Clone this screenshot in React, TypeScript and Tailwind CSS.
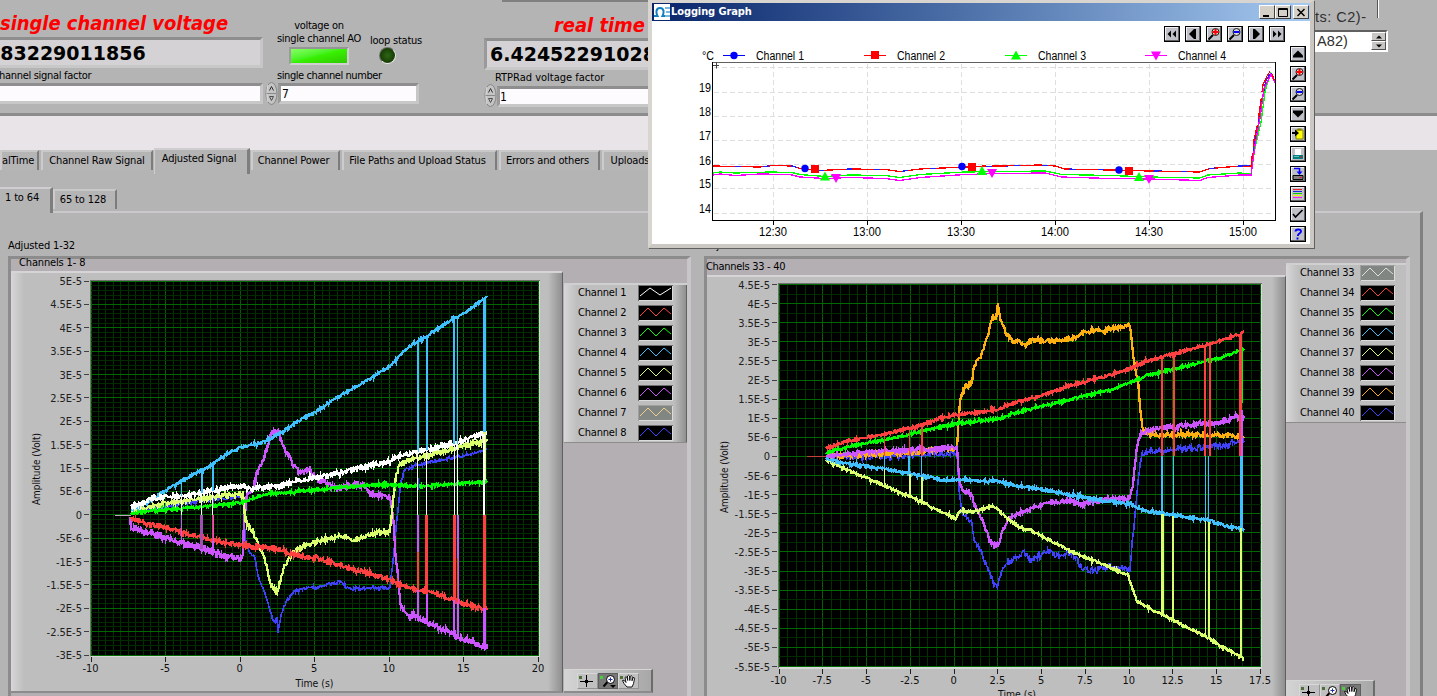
import React from "react";

type Pt = [number, number];

interface Trace {
  color: string;
  points: Pt[];
  noise: number;
  width?: number;
}

interface Drop {
  x: number;
  y1: number;
  y2: number;
  color: string;
  width: number;
}

function noisyPath(points: Pt[], noise: number, seed: number): string {
  let s = seed;
  const rand = () => {
    s = (s * 1103515245 + 12345) % 2147483648;
    return s / 2147483648;
  };
  const out: string[] = [];
  for (let i = 0; i < points.length - 1; i++) {
    const [x0, y0] = points[i];
    const [x1, y1] = points[i + 1];
    const n = Math.max(1, Math.round((x1 - x0) / 0.75));
    for (let k = 0; k < n; k++) {
      const t = k / n;
      const spike = rand() > 0.9 ? 1.9 : 1;
      const y = y0 + (y1 - y0) * t + (rand() - 0.5) * 2.3 * noise * spike;
      out.push(`${(x0 + (x1 - x0) * t).toFixed(1)},${y.toFixed(1)}`);
    }
  }
  const last = points[points.length - 1];
  out.push(`${last[0]},${last[1]}`);
  return out.join(" ");
}

const SKY = "#40c0ff";
const RED = "#ff4040";
const GREEN = "#00ff00";
const LIME = "#dcff70";
const PURPLE = "#cc55ff";
const BLUE = "#4040ff";
const ORANGE = "#ffb010";
const WHITE = "#ffffff";

const leftTraces: Trace[] = [
  { color: BLUE, noise: 1.3, width: 1.6, points: [[131, 511], [165, 507], [200, 501], [240, 497], [244, 497], [245, 540], [249, 551], [255, 557], [258, 577], [263, 588], [268, 603], [273, 620], [275, 622], [277, 618], [278, 632], [281, 615], [286, 602], [294, 592], [300, 589], [315, 588], [330, 584], [340, 582], [350, 589], [370, 588], [390, 588], [393, 560], [397, 520], [401, 480], [405, 470], [415, 466], [440, 460], [465, 455], [487, 449]] },
  { color: PURPLE, noise: 2.3, points: [[130, 516], [131, 529], [150, 532], [165, 538], [182, 543], [200, 548], [220, 554], [240, 559], [243, 556], [244, 520], [247, 495], [253, 490], [257, 472], [262, 462], [268, 445], [272, 432], [279, 431], [282, 445], [288, 455], [294, 467], [300, 473], [307, 470], [316, 478], [327, 484], [340, 488], [352, 484], [365, 486], [370, 494], [385, 496], [390, 498], [393, 515], [396, 560], [399, 590], [401, 608], [406, 613], [420, 620], [440, 628], [455, 635], [470, 641], [487, 649]] },
  { color: LIME, noise: 1.9, points: [[131, 511], [165, 504], [200, 499], [240, 493], [243, 493], [245, 515], [247, 524], [253, 532], [257, 541], [262, 551], [266, 563], [269, 578], [273, 589], [278, 590], [281, 578], [285, 564], [293, 553], [302, 547], [316, 542], [330, 538], [345, 536], [352, 541], [365, 536], [380, 532], [389, 531], [391, 525], [393, 500], [396, 477], [399, 466], [405, 461], [430, 455], [456, 448], [470, 445], [487, 439]] },
  { color: SKY, noise: 1.1, points: [[131, 510], [148, 502], [165, 491], [182, 481], [200, 471], [213, 464], [225, 455], [240, 447], [262, 443], [270, 439], [277, 435], [290, 427], [300, 420], [316, 412], [330, 402], [350, 390], [370, 379], [390, 366], [397, 359], [405, 350], [418, 341], [427, 336], [440, 327], [455, 318], [465, 313], [478, 303], [485, 299], [487, 296]] },
  { color: GREEN, noise: 1.1, points: [[131, 513], [165, 510], [200, 507], [240, 503], [253, 498], [265, 495], [280, 493], [310, 490], [345, 487], [375, 485], [395, 485], [425, 486], [455, 484], [487, 482]] },
  { color: RED, noise: 1.7, points: [[131, 518], [140, 522], [165, 527], [182, 533], [200, 537], [220, 542], [240, 545], [270, 548], [280, 550], [290, 554], [300, 556], [320, 559], [345, 567], [370, 573], [390, 580], [405, 587], [420, 590], [440, 595], [456, 601], [470, 605], [487, 610]] },
  { color: WHITE, noise: 1.8, points: [[131, 508], [148, 500], [165, 497], [182, 496], [200, 493], [220, 489], [240, 486], [250, 488], [275, 487], [300, 480], [316, 478], [345, 471], [370, 466], [389, 461], [405, 455], [420, 451], [440, 447], [456, 443], [470, 438], [487, 432]] },
];

const leftDrops: Drop[] = [
  { x: 181.5, y1: 481, y2: 496, color: SKY, width: 1 },
  { x: 181.5, y1: 496, y2: 515, color: WHITE, width: 1 },
  { x: 181.5, y1: 515, y2: 545, color: PURPLE, width: 1 },
  { x: 202, y1: 470, y2: 493, color: SKY, width: 2 },
  { x: 201.5, y1: 493, y2: 515, color: WHITE, width: 1 },
  { x: 201.5, y1: 515, y2: 549, color: "#a050b0", width: 3 },
  { x: 213, y1: 465, y2: 491, color: SKY, width: 2 },
  { x: 212.5, y1: 491, y2: 515, color: WHITE, width: 1 },
  { x: 213, y1: 515, y2: 553, color: PURPLE, width: 2 },
  { x: 212.5, y1: 515, y2: 541, color: RED, width: 1 },
  { x: 418, y1: 341, y2: 452, color: SKY, width: 2 },
  { x: 418, y1: 478, y2: 490, color: BLUE, width: 2 },
  { x: 417.5, y1: 450, y2: 515, color: WHITE, width: 1 },
  { x: 418, y1: 515, y2: 620, color: PURPLE, width: 2 },
  { x: 418, y1: 552, y2: 590, color: RED, width: 2 },
  { x: 427, y1: 336, y2: 450, color: SKY, width: 2 },
  { x: 426.5, y1: 450, y2: 515, color: WHITE, width: 1 },
  { x: 426.5, y1: 515, y2: 594, color: RED, width: 3 },
  { x: 427, y1: 594, y2: 624, color: PURPLE, width: 2 },
  { x: 454, y1: 318, y2: 444, color: SKY, width: 2 },
  { x: 454.5, y1: 444, y2: 515, color: WHITE, width: 1 },
  { x: 454.5, y1: 515, y2: 600, color: RED, width: 3 },
  { x: 454, y1: 600, y2: 635, color: PURPLE, width: 2 },
  { x: 457.5, y1: 317, y2: 444, color: SKY, width: 1 },
  { x: 457.5, y1: 444, y2: 515, color: WHITE, width: 1 },
  { x: 458, y1: 515, y2: 637, color: PURPLE, width: 2 },
  { x: 457.5, y1: 558, y2: 602, color: RED, width: 1 },
  { x: 484.5, y1: 300, y2: 432, color: SKY, width: 3 },
  { x: 484.5, y1: 432, y2: 480, color: LIME, width: 3 },
  { x: 484, y1: 434, y2: 515, color: WHITE, width: 2 },
  { x: 484.5, y1: 515, y2: 608, color: RED, width: 3 },
  { x: 484.5, y1: 608, y2: 647, color: PURPLE, width: 3 },
];

const rightTraces: Trace[] = [
  { color: BLUE, noise: 2.4, width: 1.6, points: [[826, 457], [900, 456], [957, 453], [959, 490], [962, 512], [972, 523], [974, 540], [980, 549], [987, 567], [993, 582], [998, 586], [1000, 575], [1008, 563], [1024, 553], [1032, 561], [1047, 551], [1060, 556], [1073, 553], [1080, 566], [1090, 571], [1110, 567], [1130, 570], [1132, 545], [1135, 515], [1138, 480], [1141, 458], [1146, 451], [1175, 449], [1210, 447], [1244, 442]] },
  { color: ORANGE, noise: 1.7, points: [[826, 456], [885, 454], [925, 451], [957, 448], [958, 430], [960, 400], [965, 387], [972, 383], [974, 365], [980, 358], [984, 348], [988, 335], [993, 316], [996, 320], [998, 303], [1000, 318], [1005, 332], [1012, 341], [1020, 342], [1025, 346], [1030, 340], [1060, 341], [1078, 337], [1082, 332], [1110, 330], [1130, 325], [1132, 345], [1135, 368], [1138, 380], [1141, 418], [1143, 431], [1160, 435], [1220, 435], [1244, 438]] },
  { color: PURPLE, noise: 1.8, points: [[826, 456], [885, 451], [925, 449], [957, 447], [959, 478], [962, 490], [972, 494], [974, 505], [980, 514], [985, 528], [990, 541], [994, 545], [999, 544], [1003, 529], [1010, 518], [1020, 513], [1035, 507], [1050, 502], [1070, 501], [1083, 504], [1105, 499], [1130, 498], [1133, 485], [1137, 445], [1141, 433], [1150, 430], [1180, 426], [1215, 423], [1244, 416]] },
  { color: LIME, noise: 1.0, points: [[826, 460], [840, 467], [885, 486], [920, 501], [956, 519], [960, 511], [972, 512], [994, 506], [1000, 512], [1010, 521], [1025, 530], [1030, 530], [1055, 543], [1074, 553], [1100, 563], [1128, 575], [1132, 587], [1137, 601], [1150, 609], [1165, 616], [1190, 629], [1205, 636], [1225, 648], [1244, 659]] },
  { color: SKY, noise: 1.2, points: [[826, 458], [840, 463], [885, 469], [915, 475], [945, 480], [998, 481], [1020, 486], [1050, 491], [1080, 497], [1130, 504], [1145, 511], [1180, 516], [1210, 521], [1230, 527], [1244, 529]] },
  { color: GREEN, noise: 1.1, points: [[826, 453], [850, 446], [885, 440], [915, 433], [940, 427], [955, 424], [998, 419], [1015, 413], [1050, 404], [1080, 397], [1110, 390], [1130, 383], [1145, 376], [1165, 371], [1190, 365], [1220, 358], [1244, 349]] },
  { color: RED, noise: 1.1, points: [[826, 449], [840, 443], [855, 440], [885, 434], [910, 428], [925, 424], [940, 418], [955, 415], [975, 413], [998, 409], [1020, 401], [1050, 393], [1075, 384], [1100, 378], [1130, 369], [1145, 362], [1162, 357], [1180, 352], [1210, 344], [1240, 334], [1244, 332]] },
];

const rightDrops: Drop[] = [
  { x: 884.5, y1: 434, y2: 456, color: RED, width: 1 },
  { x: 884.5, y1: 456, y2: 469, color: SKY, width: 1 },
  { x: 884.5, y1: 469, y2: 486, color: LIME, width: 1 },
  { x: 909.5, y1: 428, y2: 456, color: RED, width: 1 },
  { x: 909, y1: 456, y2: 474, color: SKY, width: 2 },
  { x: 910, y1: 474, y2: 498, color: LIME, width: 2 },
  { x: 922, y1: 425, y2: 456, color: RED, width: 2 },
  { x: 921.5, y1: 456, y2: 477, color: SKY, width: 1 },
  { x: 922, y1: 477, y2: 503, color: LIME, width: 2 },
  { x: 1162, y1: 357, y2: 456, color: RED, width: 2 },
  { x: 1162, y1: 456, y2: 514, color: SKY, width: 1.6 },
  { x: 1162.5, y1: 514, y2: 615, color: LIME, width: 3 },
  { x: 1174, y1: 354, y2: 456, color: RED, width: 2 },
  { x: 1173.5, y1: 456, y2: 516, color: SKY, width: 1 },
  { x: 1173, y1: 516, y2: 620, color: LIME, width: 2 },
  { x: 1205, y1: 345, y2: 456, color: RED, width: 2 },
  { x: 1205.5, y1: 456, y2: 521, color: SKY, width: 1 },
  { x: 1205.5, y1: 521, y2: 637, color: LIME, width: 1 },
  { x: 1210, y1: 344, y2: 456, color: RED, width: 2 },
  { x: 1208.5, y1: 456, y2: 522, color: SKY, width: 1 },
  { x: 1209, y1: 522, y2: 639, color: LIME, width: 2 },
  { x: 1242, y1: 350, y2: 403, color: GREEN, width: 2 },
  { x: 1240.5, y1: 334, y2: 410, color: RED, width: 3 },
  { x: 1241, y1: 410, y2: 456, color: PURPLE, width: 4 },
  { x: 1240, y1: 410, y2: 456, color: RED, width: 2 },
  { x: 1241.5, y1: 456, y2: 528, color: SKY, width: 3 },
  { x: 1241, y1: 528, y2: 655, color: LIME, width: 2 },
];

interface AxisTick {
  at: number;
  label: string;
}

interface PlotProps {
  ox: number;
  oy: number;
  w: number;
  h: number;
  plot: { x1: number; y1: number; x2: number; y2: number };
  xTicks: AxisTick[];
  yTicks: AxisTick[];
  xMinor: number;
  yMinor: number;
  traces: Trace[];
  drops: Drop[];
  lead: { x1: number; x2: number; y: number; color: string };
  yTitle: { x: number; y: number };
  xTitle: { x: number; y: number };
}

function lines(ticks: AxisTick[], minor: number): number[] {
  const a = ticks[0].at;
  const b = ticks[ticks.length - 1].at;
  const n = (ticks.length - 1) * minor;
  return Array.from({ length: n + 1 }, (_, i) => a + ((b - a) * i) / n);
}

function Plot(p: PlotProps) {
  const { plot } = p;
  return (
    <svg
      className="block shrink-0 font-['DejaVu_Sans_Condensed','DejaVu_Sans',sans-serif] text-[11px] tracking-normal"
      width={p.w}
      height={p.h}
      viewBox={`${p.ox} ${p.oy} ${p.w} ${p.h}`}
    >
      <rect x={plot.x1 - 1} y={plot.y1 - 1} width={plot.x2 - plot.x1 + 2} height={plot.y2 - plot.y1 + 2} fill="#707070" />
      <rect x={plot.x1} y={plot.y1} width={plot.x2 - plot.x1 + 1} height={plot.y2 - plot.y1 + 2} fill="#d8d8d8" />
      <rect x={plot.x1} y={plot.y1} width={plot.x2 - plot.x1} height={plot.y2 - plot.y1} fill="#000" />
      <g shapeRendering="crispEdges">
        {lines(p.xTicks, p.xMinor).map((x, i) => (
          <line key={"x" + i} x1={x} x2={x} y1={plot.y1} y2={plot.y2} stroke={i % p.xMinor === 0 ? "#006000" : "#003200"} />
        ))}
        {lines(p.yTicks, p.yMinor).map((y, i) => (
          <line key={"y" + i} x1={plot.x1} x2={plot.x2} y1={y} y2={y} stroke={i % p.yMinor === 0 ? "#006800" : "#002c00"} />
        ))}
        {p.xTicks.map((t) => (
          <line key={t.label} x1={t.at} x2={t.at} y1={plot.y2 + 2} y2={plot.y2 + 7} stroke="#202020" />
        ))}
        {p.yTicks.map((t) => (
          <line key={t.label} x1={plot.x1 - 7} x2={plot.x1 - 2} y1={t.at} y2={t.at} stroke="#404040" />
        ))}
        <line x1={p.lead.x1} x2={p.lead.x2} y1={p.lead.y} y2={p.lead.y} stroke={p.lead.color} />
        {p.traces.map((t, i) => (
          <polyline key={i} points={noisyPath(t.points, t.noise, 77 + i * 991)} fill="none" stroke={t.color} strokeWidth={t.width ?? 2.3} />
        ))}
        {p.drops.map((d, i) => (
          <line key={i} x1={d.x} x2={d.x} y1={d.y1} y2={d.y2} stroke={d.color} strokeWidth={d.width} />
        ))}
      </g>
      {p.yTicks.map((t) => (
        <text key={t.label} x={plot.x1 - 9} y={t.at + 4} textAnchor="end" fill="#202020">
          {t.label}
        </text>
      ))}
      {p.xTicks.map((t) => (
        <text key={t.label} x={t.at - 0.5} y={plot.y2 + 17} textAnchor="middle" fill="#101010">
          {t.label}
        </text>
      ))}
      <text transform={`translate(${p.yTitle.x} ${p.yTitle.y}) rotate(-90)`} textAnchor="middle" textLength="72" lengthAdjust="spacingAndGlyphs" fill="#101010">
        Amplitude (Volt)
      </text>
      <text x={p.xTitle.x} y={p.xTitle.y} textAnchor="middle" textLength="38" lengthAdjust="spacingAndGlyphs" fill="#101010">
        Time (s)
      </text>
    </svg>
  );
}

function spread(labels: string[], first: number, last: number): AxisTick[] {
  return labels.map((label, i) => ({ label, at: first + ((last - first) * i) / (labels.length - 1) }));
}

const leftY = spread(
  ["5E-5", "4.5E-5", "4E-5", "3.5E-5", "3E-5", "2.5E-5", "2E-5", "1.5E-5", "1E-5", "5E-6", "0", "-5E-6", "-1E-5", "-1.5E-5", "-2E-5", "-2.5E-5", "-3E-5"],
  281,
  655,
);
const leftX = spread(["-10", "-5", "0", "5", "10", "15", "20"], 91, 538.5);
const rightY = spread(
  ["4.5E-5", "4E-5", "3.5E-5", "3E-5", "2.5E-5", "2E-5", "1.5E-5", "1E-5", "5E-6", "0", "-5E-6", "-1E-5", "-1.5E-5", "-2E-5", "-2.5E-5", "-3E-5", "-3.5E-5", "-4E-5", "-4.5E-5", "-5E-5", "-5.5E-5"],
  284.500,
  666.500,
);
const rightX = spread(["-10", "-7.5", "-5", "-2.5", "0", "2.5", "5", "7.5", "10", "12.5", "15", "17.5"], 779, 1260.5);

function LegendRow({ name, color, muted, first }: { name: string; color: string; muted?: boolean; first?: boolean }) {
  return (
    <div className="flex h-5 items-center">
      <span className="w-[60px] tracking-[-0.2px] whitespace-nowrap">{name}</span>
      <svg className="block" width="35" height="16">
        <rect width="35" height="16" fill={muted ? "#a0a0a0" : "#707070"} />
        <rect x="1" y="1" width="34" height="15" fill="#dcdcdc" />
        <rect x="1" y="1" width="33" height="14" fill={muted ? "#828682" : "#000"} />
        <polyline points={first ? "2,11 12,3 22,10 33,3" : "2,11 10,3 18,11 26,3 33,9"} fill="none" stroke={color} strokeWidth="1" />
      </svg>
    </div>
  );
}

function Legend({ items, tail }: { items: { name: string; color: string; muted?: boolean; first?: boolean }[]; tail: string }) {
  return (
    <div className="flex h-[160px] shrink-0 border-t-2 border-b border-t-[#d0d0d0] border-b-[#8c8c8c] bg-[#bebebe]">
      <div className="w-[13px] bg-linear-to-r from-[#d8d6d8] to-[#bebebe]" />
      <div className="-mt-[2px] w-[97px] pl-px">
        {items.map((i) => (
          <LegendRow key={i.name} {...i} />
        ))}
      </div>
      <div className={tail} />
    </div>
  );
}

function Hand({ lit }: { lit: boolean }) {
  return (
    <svg width="18" height="14" viewBox="0 0 18 14" className="block">
      <path d="M8 13 5 9.500 3.500 6.500l1.500-.3L7 8.500 6 3.500l1-.8 1 .8.7 3L8.500 2l1-.8 1 .8.3 4.500.5-4.200 1-.6.9.8-.2 4.300 1-3 1-.4.6.8-1.100 5.500-1.500 3.300z" fill="#fff" stroke="#000" strokeWidth="0.9" />
      <rect x="1" y="2" width="3" height="3" fill={lit ? "#48d038" : "#4c7038"} />
    </svg>
  );
}

function Cross() {
  return (
    <svg width="18" height="14" viewBox="0 0 18 14" className="block" shapeRendering="crispEdges">
      <path d="M8.500 1v12M2 7.500h13" stroke="#000" />
      <path d="M7 6.500h1M9 6.500h1M7 8.500h1M9 8.500h1" stroke="#000" />
      <rect x="1" y="2" width="3" height="3" fill="#4c7038" />
    </svg>
  );
}

function PaletteZoom({ lit }: { lit: boolean }) {
  return (
    <svg width="18" height="14" viewBox="0 0 18 14" className="block">
      <rect x="1" y="2" width="3" height="3" fill={lit ? "#48d038" : "#4c7038"} />
      <path d="M8.500 8 4.500 12.500" stroke="#000" strokeWidth="2" />
      <circle cx="11.500" cy="5.500" r="4" fill="#fff" stroke="#000" />
      <path d="M9.500 5.500h4M11.500 3.500v4" stroke="#2030a0" />
      <path d="M11 11h6l-3 3z" fill="#000" />
    </svg>
  );
}

function GraphPalette({ active }: { active: number }) {
  return (
    <div className="flex h-[24px] w-[89px] shrink-0 items-center border-t border-r-2 border-b-2 border-t-[#d6d6d6] border-r-[#6c6c6c] border-b-[#8c8c8c] bg-linear-to-r from-[#d4d4d4] via-[#bebebe] to-[#a8a8a8] pl-[13px]">
      {[<Cross key="c" />, <PaletteZoom key="z" lit={active === 1} />, <Hand key="h" lit={active === 2} />].map((icon, i) => (
        <div
          key={i}
          className={
            i === active
              ? "flex h-4 w-[20.5px] items-center justify-center border border-[#606060] bg-[#787878]"
              : "flex h-4 w-[20.5px] items-center justify-center border border-t-[#d8d8d8] border-r-[#929292] border-b-[#929292] border-l-[#d8d8d8] bg-[#c0c0c0]"
          }
        >
          {icon}
        </div>
      ))}
    </div>
  );
}

function Stepper() {
  return (
    <svg width="13" height="24" viewBox="0 0 13 24" className="block shrink-0">
      <ellipse cx="6.500" cy="11.500" rx="5.500" ry="11" fill="#c4c4c4" stroke="#858585" />
      <path d="M3 3C1.500 7 1.500 16 3 20" stroke="#dcdcdc" fill="none" />
      <path d="M1.500 11.500h10" stroke="#8a8a8a" />
      <path d="M4.500 8.500 6.500 4.500 8.500 8.500" fill="none" stroke="#303030" />
      <path d="M4.500 14.500h4l-2 4z" fill="#c0c0c0" stroke="#505050" />
    </svg>
  );
}

function Tab({ className, label, width, current }: { className?: string; label: string; width: string; current?: boolean }) {
  return (
    <div
      className={
        (current
          ? "relative z-10 flex h-[26px] justify-center self-start border-t-2 border-r-[3px] border-l border-t-[#cfcdcf] border-r-[#7e7e7e] border-l-[#cfcdcf] bg-[#b4b4b4] pt-[2px] tracking-[-0.15px] whitespace-nowrap "
          : "mt-[2px] flex h-[20px] justify-center border-t-2 border-r-2 border-l-2 border-t-[#c8c8c8] border-r-[#7c7c7c] border-l-[#cdcbcd] bg-[#b6b5b6] pt-[2px] tracking-[-0.15px] whitespace-nowrap ") +
        width +
        " " +
        (className ?? "")
      }
    >
      {label}
    </div>
  );
}

type ToolGlyph = "first" | "left" | "zin" | "zout" | "right" | "last" | "up" | "down" | "copy" | "print" | "save" | "series" | "check" | "help";

function glyph(kind: ToolGlyph) {
  switch (kind) {
    case "first":
      return <path d="M6 3.500v7L2.500 7zM11 3.500v7L7.500 7z" fill="#000" />;
    case "last":
      return <path d="M3 3.500v7L6.500 7zM8 3.500v7l3.500-3.500z" fill="#000" />;
    case "left":
      return <path d="M10 2v10H8L3 7l5-5z" fill="#000" />;
    case "right":
      return <path d="M4 2v10h2l5-5-5-5z" fill="#000" />;
    case "up":
      return <path d="M7 3.500 12 8.500v2H2v-2z" fill="#000" />;
    case "down":
      return <path d="M7 10.500 2 5.500v-2h10v2z" fill="#000" />;
    case "zin":
    case "zout":
      return (
        <>
          <path d="M6 8 1.500 12.500" stroke="#000" strokeWidth="2" />
          <circle cx="8.500" cy="5" r="3.500" fill="#d8d8d8" stroke="#202020" />
          <path d={kind === "zin" ? "M5.500 5h6M8.500 2v6" : "M5.500 5h6"} stroke={kind === "zin" ? "#f00" : "#00f"} strokeWidth="2" />
        </>
      );
    case "copy":
      return (
        <>
          <path d="M5 3h7v9H5z" fill="#ffff00" stroke="#808000" />
          <path d="M6.500 1.500h4v2h-4z" fill="#808000" />
          <path d="M1 5h3V2.500L8 6 4 9.500V7H1z" fill="#000" />
        </>
      );
    case "print":
      return (
        <>
          <path d="M4 2h6v6H4z" fill="#fff" />
          <path d="M2 8h10v4H2z" fill="#008080" />
          <path d="M3 9.500h5" stroke="#60c0c0" />
          <path d="M9 10h2" stroke="#f00" />
        </>
      );
    case "save":
      return (
        <>
          <path d="M2 8.500h10v4H2z" fill="#808080" stroke="#000" />
          <path d="M3 1.500h5.500V5" stroke="#00f" fill="none" strokeWidth="1.500" />
          <path d="M5.500 4.500h6L8.500 8z" fill="#00f" />
          <path d="M8.500 10.500h2" stroke="#f00" />
        </>
      );
    case "series":
      return (
        <g shapeRendering="crispEdges">
          <path d="M2 2.500h9" stroke="#f02020" />
          <path d="M2 4.500h9" stroke="#2020e0" />
          <path d="M2 6.500h9" stroke="#00d000" />
          <path d="M2 8.500h9" stroke="#f0f000" />
          <path d="M2 10.500h9" stroke="#f020f0" />
        </g>
      );
    case "check":
      return <path d="M2 7l2.500 3L11.500 3" fill="none" stroke="#000" strokeWidth="1.700" />;
    case "help":
      return <path d="M4.500 4.500C4.500 2 10 1.500 10 4.500 10 6.500 7 6 6.800 9M6.500 10.500v2" fill="none" stroke="#0000ff" strokeWidth="1.900" />;
  }
}

function ToolButton({ kind }: { kind: ToolGlyph }) {
  return (
    <div className="size-4 shrink-0 border border-black bg-[#c0c0c8]">
      <svg width="14" height="14" viewBox="0 0 14 14" className="block">
        <path d="M0 14V0h14" fill="none" stroke="#fff" strokeWidth="1.500" />
        <path d="M14 0v14H0" fill="none" stroke="#606060" strokeWidth="2" />
        {glyph(kind)}
      </svg>
    </div>
  );
}

const logRed: Pt[] = [[713, 166], [760, 167], [773, 165.5], [792, 166], [800, 168.5], [820, 170.5], [850, 169], [885, 169.5], [900, 171.5], [920, 169], [965, 167], [985, 166], [1000, 166], [1040, 165], [1055, 166], [1065, 169], [1110, 170], [1150, 171], [1200, 172], [1210, 168.5], [1240, 166], [1251, 166.5], [1254, 140], [1258, 122], [1261, 100], [1263, 85], [1267, 76], [1271, 70], [1274, 80]];
const logBlue: Pt[] = [[713, 166], [760, 167], [773, 165.5], [792, 166], [800, 168.5], [820, 170.5], [850, 169], [885, 169.5], [900, 171.5], [920, 169], [965, 167], [1040, 165], [1055, 166], [1065, 169], [1110, 170], [1200, 172], [1210, 168.5], [1240, 166], [1251, 166], [1255, 142], [1259, 120], [1263, 95], [1266, 80], [1271, 73], [1274, 80]];
const logGreen: Pt[] = [[713, 173], [720, 172], [735, 173], [770, 172], [792, 172.5], [800, 174.5], [825, 176.5], [850, 175], [885, 175.5], [900, 177.5], [920, 174.5], [965, 172], [1000, 171.5], [1045, 171], [1062, 174.5], [1110, 175.5], [1150, 177], [1200, 178], [1208, 175], [1240, 173], [1251, 174], [1255, 148], [1261, 122], [1265, 92], [1267, 84], [1271, 73], [1275, 83]];
const logMagenta: Pt[] = [[713, 175], [720, 174], [735, 175.5], [760, 174], [790, 174.5], [800, 177], [825, 178.5], [850, 177.5], [885, 178.5], [900, 180.5], [920, 177.5], [965, 174.5], [1000, 173.5], [1045, 173], [1062, 177], [1110, 178.5], [1150, 179], [1200, 180.5], [1208, 177.5], [1240, 175], [1251, 175], [1255, 145], [1260, 118], [1264, 88], [1267, 83], [1271, 74], [1275, 83]];

function Marker({ kind, x, y }: { kind: number; x: number; y: number }) {
  if (kind === 0) return <circle cx={x} cy={y} r="3.7" fill="#0000ff" />;
  if (kind === 1) return <rect x={x - 4} y={Math.round(y) - 4} width="8" height="8" fill="#ff0000" />;
  if (kind === 2) return <path d={`M${x} ${y - 5}l5 9h-10z`} fill="#00ff00" />;
  return <path d={`M${x} ${y + 5}l5 -9h-10z`} fill="#ff00ff" />;
}

function LogChart() {
  const poly = (pts: Pt[]) => pts.map((p) => p.join(",")).join(" ");
  const markers: [number, number, number][] = [
    [0, 805, 168.5], [1, 815, 169], [2, 825, 176.5], [3, 836, 178],
    [0, 962, 166.5], [1, 972, 166.5], [2, 982, 171], [3, 992, 173],
    [0, 1119, 170], [1, 1129, 171], [2, 1139, 177], [3, 1149, 179],
  ];
  return (
    <svg className="block font-['Liberation_Sans',Arial,sans-serif] text-[12px] tracking-normal" width="586" height="198" viewBox="696 45 586 198">
      {[67.5, 92.5, 116.5, 140.5, 164.5, 188.5, 213.5].map((y) => (
        <line key={y} x1="714" x2="1274" y1={y} y2={y} stroke="#dedede" strokeDasharray="5 3" />
      ))}
      {[773.5, 867.5, 961.5, 1055.5, 1149.5, 1243.5].map((x) => (
        <line key={x} x1={x} x2={x} y1="64" y2="220" stroke="#dedede" strokeDasharray="5 3" />
      ))}
      <g shapeRendering="crispEdges">
        <path d="M712 62.500h564" stroke="#606060" />
        <path d="M712.500 62v159M1275.500 62v159M712 220.500h564" stroke="#000" fill="none" />
        {[773.5, 867.5, 961.5, 1055.5, 1149.5, 1243.5].map((x) => (
          <line key={x} x1={x} x2={x} y1="221" y2="225" stroke="#000" />
        ))}
      </g>
      <path d="M713 65.500h6M716.500 62.500v6" stroke="#404040" />
      <g fill="none" strokeWidth="1.300" shapeRendering="crispEdges">
        <polyline points={poly(logGreen)} stroke="#00ff00" />
        <polyline points={poly(logBlue)} stroke="#2020ff" />
        <polyline points={poly(logMagenta)} stroke="#ff00ff" />
        <polyline points={poly(logRed)} stroke="#ff0000" strokeDasharray="22 6" />
      </g>
      {markers.map(([k, x, y]) => (
        <Marker key={x} kind={k} x={x} y={y} />
      ))}
      {[["19", 92], ["18", 116], ["17", 140], ["16", 165], ["15", 188], ["14", 213]].map(([t, y]) => (
        <text key={t} x="711" y={y as number} textAnchor="end" textLength="12" lengthAdjust="spacingAndGlyphs">
          {t}
        </text>
      ))}
      {["12:30", "13:00", "13:30", "14:00", "14:30", "15:00"].map((t, i) => (
        <text key={t} x={773 + i * 94} y="236" textAnchor="middle" textLength="28" lengthAdjust="spacingAndGlyphs">
          {t}
        </text>
      ))}
      <text x="702" y="60" textLength="12" lengthAdjust="spacingAndGlyphs">°C</text>
      {[
        { n: "Channel 1", x: 734, c: "#0000ff" },
        { n: "Channel 2", x: 875, c: "#ff0000" },
        { n: "Channel 3", x: 1016, c: "#00ff00" },
        { n: "Channel 4", x: 1156, c: "#ff00ff" },
      ].map((l, i) => (
        <g key={l.n}>
          <path d={`M${l.x - 11} 55.500h22`} stroke={l.c} />
          <Marker kind={i} x={l.x} y={i === 1 ? 55 : 55.5} />
          <text x={l.x + 22} y="60" textLength="48" lengthAdjust="spacingAndGlyphs">
            {l.n}
          </text>
        </g>
      ))}
    </svg>
  );
}

function LoggingWindow() {
  const caption = "flex h-[14px] w-4 items-center justify-center border border-t-white border-r-[#404040] border-b-[#404040] border-l-white bg-[#d4d0c8]";
  return (
    <section className="absolute top-0 left-[648px] z-20 flex h-[248px] w-[666px] flex-col border-t-[3px] border-r-[4px] border-b-[4px] border-l-[4px] border-t-[#d8d4d0] border-r-[#cbc8c4] border-b-[#cbc8c4] border-l-[#d8d4d0] bg-white shadow-[1px_1px_0_0_#606060]">
      <header className="flex h-[18px] shrink-0 items-center bg-linear-to-r from-[#0a246a] to-[#a6caf0] pr-px pl-[2px]">
        <svg width="16" height="16" viewBox="0 0 16 16" className="block">
          <rect width="16" height="16" fill="#fff" />
          <path d="M0 12h3.500C1.500 8.500 2 4 6 4s4.500 4.500 2.500 8H11" fill="none" stroke="#1080c0" strokeWidth="2" />
          <path d="M11 4h5M12 8h4M11 12h5" stroke="#50a0d0" strokeWidth="1.500" />
        </svg>
        <h1 className="ml-px grow text-[11px] leading-[14px] font-bold tracking-[-0.1px] text-white">Logging Graph</h1>
        <div className={caption}>
          <svg width="12" height="11" className="block"><path d="M2 9h6" stroke="#000" strokeWidth="2" /></svg>
        </div>
        <div className={caption}>
          <svg width="12" height="11" className="block"><path d="M1.500 1.500h9v8h-9zM1.500 2.500h9" stroke="#000" fill="none" /></svg>
        </div>
        <div className={caption + " ml-[2px]"}>
          <svg width="12" height="11" className="block"><path d="M2.500 2l7 7M9.500 2l-7 7" stroke="#000" strokeWidth="1.500" fill="none" /></svg>
        </div>
      </header>
      <div className="flex grow">
        <div className="flex w-[634px] flex-col pl-[44px]">
          <div className="flex h-[24px] gap-[5px] self-end pt-[5px] pr-[1px]">
            <ToolButton kind="first" />
            <ToolButton kind="left" />
            <ToolButton kind="zin" />
            <ToolButton kind="zout" />
            <ToolButton kind="right" />
            <ToolButton kind="last" />
          </div>
          <LogChart />
        </div>
        <div className="flex flex-col gap-1 pt-[25px] pl-1">
          {(["up", "zin", "zout", "down", "copy", "print", "save", "series", "check", "help"] as ToolGlyph[]).map((k) => (
            <ToolButton key={k} kind={k} />
          ))}
        </div>
      </div>
    </section>
  );
}

const sunkenY = "border-t-[3px] border-b-[3px] border-r-[3px] border-t-[#8e8e8e] border-r-[#c6c6c6] border-b-[#c8c8c8]";
const sunken = "border-t-[3px] border-l-[3px] border-r-[3px] border-b-[3px] border-t-[#8e8e8e] border-l-[#9a9a9a] border-r-[#c6c6c6] border-b-[#c8c8c8]";

export default function App() {
  return (
    <div className="relative h-[696px] w-[1437px] overflow-hidden bg-[#b4b4b4] font-['DejaVu_Sans_Condensed','DejaVu_Sans',sans-serif] text-[11px] leading-[14px] tracking-[-0.15px] text-black">
      <header className="flex h-[116px] border-b-[3px] border-[#8c8c8c]">
        <div className="flex w-[263px] shrink-0 flex-col">
          <h2 className="mt-[11px] h-[26px] text-[20px] leading-[25px] font-bold tracking-[-0.05px] whitespace-nowrap text-[#ff0000] italic">single channel voltage</h2>
          <div className={"flex h-[31px] items-center bg-[#d4d2d5] font-['DejaVu_Sans',sans-serif] text-[19px] font-bold tracking-normal whitespace-nowrap " + sunkenY}>
            <span className="-ml-[13px]">283229011856</span>
          </div>
          <div className="mt-px h-[14px] tracking-[-0.3px]">
            <span className="-ml-[1px]">hannel signal factor</span>
          </div>
          <div className={"h-[21px] bg-[#fdfbfd] " + sunkenY} />
        </div>
        <div className="flex w-[221px] shrink-0 flex-col pl-[2px]">
          <div className="flex h-[69px]">
            <div className="ml-[11px] flex w-[86px] flex-col items-center pt-[20px] text-center leading-[12.5px] tracking-[-0.3px] whitespace-nowrap">
              <div>voltage on</div>
              <div>single channel AO</div>
              <div className="mt-[2px] h-[18px] w-[60px] border-2 border-t-[#959595] border-r-[#d0d0d0] border-b-[#d0d0d0] border-l-[#9c9c9c] bg-linear-to-br from-[#84ff60] via-[#38f000] to-[#30c800]" />
            </div>
            <div className="ml-[8px] flex flex-col items-center pt-[34px] tracking-[-0.25px] whitespace-nowrap">
              <div className="h-[13px]">loop status</div>
              <div className="-ml-[17px] size-[17px] rounded-full border border-t-[#707070] border-r-[#e6e6e6] border-b-[#eeeeee] border-l-[#707070] bg-radial from-[#2c6014] from-10% to-[#0c2c00]" />
            </div>
          </div>
          <div className="ml-[12px] h-[13px] tracking-[-0.42px]">single channel number</div>
          <div className="flex">
            <Stepper />
            <div className={"mt-px flex h-[21px] w-[141px] items-center bg-[#fdfbfd] pl-px text-[12px] " + sunken}>7</div>
          </div>
        </div>
        <div className="flex shrink-0 flex-col">
          <div className="ml-[18px] h-[13px] w-[220px] border-t-2 border-[#808080]" />
          <h2 className="ml-[70px] h-[25px] text-[20px] leading-[25px] font-bold tracking-[-0.05px] text-[#ff0000] italic">real time</h2>
          <div className={"flex h-[32px] w-[240px] items-center bg-[#d4d2d5] pl-[3px] font-['DejaVu_Sans',sans-serif] text-[19px] font-bold tracking-normal " + sunken}>6.42452291028</div>
          <div className="ml-[11px] h-[14px] pt-px tracking-normal">RTPRad voltage factor</div>
          <div className="flex">
            <Stepper />
            <div className={"mt-[2px] flex h-[21px] w-[240px] items-center bg-[#fdfbfd] pl-px text-[12px] " + sunken}>
              <span className="-ml-px">1</span>
            </div>
          </div>
        </div>
        <div className="ml-auto flex w-[126px] flex-col font-['Liberation_Sans',Arial,sans-serif] text-[14.5px] text-[#303030]">
          <div className="flex h-[30px]">
            <div className="w-[66px] pt-[10px] pl-[4px] tracking-[0.5px] whitespace-nowrap">ts: C2)-</div>
            <div className="h-[18px] w-[2px] border-r border-white bg-[#555]" />
          </div>
          <div className="flex h-[22px] w-[77px] items-center border-t-2 border-r-2 border-b-2 border-t-[#606060] border-r-white border-b-white bg-white pl-[6px]">
            <span className="grow tracking-[0.1px]">A82)</span>
            <div className="flex w-[15px] flex-col">
              {["M3 5.500 6 2.500 9 5.500z", "M3 2.500 6 5.500 9 2.500z"].map((d) => (
                <div key={d} className="flex h-[9px] items-center justify-center border border-t-white border-r-[#505050] border-b-[#505050] border-l-white bg-[#c8c6c4]">
                  <svg width="12" height="7" className="block"><path d={d} fill="#000" /></svg>
                </div>
              ))}
            </div>
          </div>
        </div>
      </header>

      <nav className="flex h-[58px] border-b-[3px] border-[#c8c6c8] bg-[#e8e4e8] pt-[32px]">
        <div className="flex h-[26px] w-full items-start bg-linear-to-b from-transparent from-[8%] to-[#b4b4b4] to-[8%]">
          <Tab label="alTime" width="w-[39px]" className="justify-start border-l-0" />
          <Tab label="Channel Raw Signal" width="w-[112px]" className="ml-[2px]" />
          <Tab label="Adjusted Signal" width="w-[96px]" className="ml-px pr-1" current />
          <Tab label="Channel Power" width="w-[89px]" className="ml-px pr-1" />
          <Tab label="File Paths and Upload Status" width="w-[155px]" className="ml-[2px] pr-1" />
          <Tab label="Errors and others" width="w-[101px]" className="ml-[2px] pr-1" />
          <Tab label="Uploads" width="w-[60px]" className="ml-[2px] pr-1" />
        </div>
      </nav>

      <div className="h-[37px] pt-[13px]">
        <div className="flex h-[26px] items-start">
          <Tab label="1 to 64" width="w-[53px]" className="justify-start border-l-0 pl-[5px]" current />
          <Tab label="65 to 128" width="w-[64px]" className="pr-1" />
        </div>
      </div>

      <main className="h-[490px] w-[1423px] border-t-2 border-r-[3px] border-t-[#cac8ca] border-r-[#808080] pt-[26px]">
        <div className="flex items-start">
          <section className="ml-[8px] w-[683px]">
            <h3 className="h-[17px]">Adjusted 1-32</h3>
            <div className="h-[460px] border-t-[3px] border-r-4 border-l-[3px] border-t-[#8c8c8c] border-r-[#c8c6c8] border-l-[#8c8c8c] bg-[#b3afb3]">
              <h4 className="h-[12px] pl-[8px] leading-[7px]">Channels 1- 8</h4>
              <div className="flex">
                <div className="flex h-[422px] w-[552px] shrink-0 border-t-2 border-r border-b-2 border-t-[#d6d4d6] border-r-[#606060] border-b-[#8c8c8c] bg-[#bebebe]">
                  <div className="w-[13px] bg-linear-to-r from-[#d8d6d8] to-[#bebebe]" />
                  <Plot
                    ox={24}
                    oy={273}
                    w={524}
                    h={416}
                    plot={{ x1: 91, y1: 281, x2: 539, y2: 655 }}
                    xTicks={leftX}
                    yTicks={leftY}
                    xMinor={10}
                    yMinor={5}
                    traces={leftTraces}
                    drops={leftDrops}
                    lead={{ x1: 115, x2: 131, y: 515.5, color: "#c0a0c0" }}
                    yTitle={{ x: 40, y: 469 }}
                    xTitle={{ x: 314.5, y: 687 }}
                  />
                  <div className="grow bg-linear-to-r from-[#bebebe] to-[#909090]" />
                </div>
                <div className="mt-[12px] ml-px flex grow flex-col">
                  <Legend
                    tail="w-[13px] border-r border-[#606060] bg-linear-to-r from-[#bebebe] to-[#909090]"
                    items={[
                      { name: "Channel 1", color: WHITE, first: true },
                      { name: "Channel 2", color: RED },
                      { name: "Channel 3", color: GREEN },
                      { name: "Channel 4", color: SKY },
                      { name: "Channel 5", color: LIME },
                      { name: "Channel 6", color: PURPLE },
                      { name: "Channel 7", color: "#f0d090", muted: true },
                      { name: "Channel 8", color: BLUE },
                    ]}
                  />
                  <div className="mt-[226px]">
                    <GraphPalette active={1} />
                  </div>
                </div>
              </div>
            </div>
          </section>

          <section className="ml-[13px] w-[706px]">
            <h3 className="h-[17px]">Adjusted 33-64</h3>
            <div className="flex h-[460px] border-t-[3px] border-r-4 border-l-[3px] border-t-[#8c8c8c] border-r-[#c8c6c8] border-l-[#8c8c8c] bg-[#b3afb3]">
              <div className="w-[579px] shrink-0">
                <h4 className="-ml-px h-[16px] leading-[15px] tracking-[-0.3px]">Channels 33 - 40</h4>
                <div className="flex h-[450px] border-t-2 border-r border-t-[#d6d4d6] border-r-[#606060] bg-[#bebebe]">
                  <Plot
                    ox={707}
                    oy={277}
                    w={565}
                    h={430}
                    plot={{ x1: 779, y1: 284, x2: 1261, y2: 667 }}
                    xTicks={rightX}
                    yTicks={rightY}
                    xMinor={5}
                    yMinor={2}
                    traces={rightTraces}
                    drops={rightDrops}
                    lead={{ x1: 807, x2: 826, y: 456.5, color: "#c04040" }}
                    yTitle={{ x: 728, y: 477 }}
                    xTitle={{ x: 1017, y: 698 }}
                  />
                  <div className="grow bg-linear-to-r from-[#bebebe] to-[#909090]" />
                </div>
              </div>
              <div className="mt-[4px] flex grow flex-col">
                <Legend
                  tail="grow bg-[#bebebe]"
                  items={[
                    { name: "Channel 33", color: "#e0e0e0", muted: true },
                    { name: "Channel 34", color: RED },
                    { name: "Channel 35", color: GREEN },
                    { name: "Channel 36", color: SKY },
                    { name: "Channel 37", color: LIME },
                    { name: "Channel 38", color: PURPLE },
                    { name: "Channel 39", color: ORANGE },
                    { name: "Channel 40", color: BLUE },
                  ]}
                />
                <div className="mt-[257px]">
                  <GraphPalette active={2} />
                </div>
              </div>
            </div>
          </section>
        </div>
      </main>

      <LoggingWindow />
    </div>
  );
}
